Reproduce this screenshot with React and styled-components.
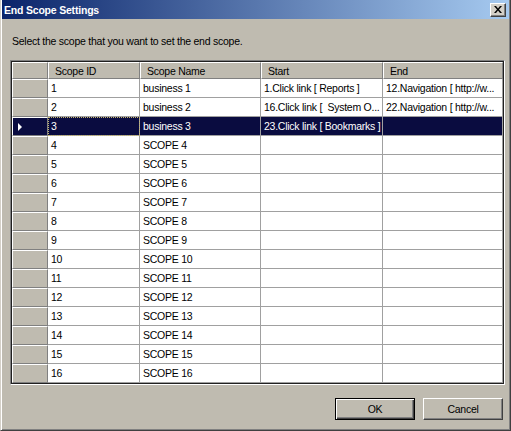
import React from 'react';
import styled, { createGlobalStyle } from 'styled-components';

const Global = createGlobalStyle`
    html, body {
        margin: 0;
        padding: 0;
        background: #bfbbb0;
    }
    * {
        box-sizing: border-box;
    }
`;

const Window = styled.div`
    width: 511px;
    height: 431px;
    display: flex;
    flex-direction: column;
    background: #bfbbb0;
    border-left: 1px solid #d4d0c8;
    border-right: 1px solid #404040;
    border-bottom: 1px solid #404040;
    box-shadow: inset 1px 0 #ffffff, inset -1px -1px #808080;
    font-family: 'Liberation Sans', Arial, sans-serif;
    font-size: 10.5px;
    letter-spacing: -0.25px;
    color: #000;
    padding: 0 1px 1px 1px;
`;

const TitleBar = styled.div`
    height: 19px;
    display: flex;
    align-items: center;
    justify-content: space-between;
    padding: 0 3px 0 2px;
    background: linear-gradient(to right, #0a246a, #a6caf0);
`;

const Title = styled.div`
    color: #fff;
    font-weight: bold;
    font-size: 10.5px;
    letter-spacing: -0.2px;
`;

const CloseButton = styled.div`
    width: 16px;
    height: 14px;
    background: #d4d0c8;
    display: flex;
    align-items: center;
    justify-content: center;
    border-top: 1px solid #fff;
    border-left: 1px solid #fff;
    border-right: 1px solid #404040;
    border-bottom: 1px solid #404040;
    box-shadow: inset -1px -1px #808080;
`;

const Body = styled.div`
    flex: 1;
    display: flex;
    flex-direction: column;
    padding: 16px 6px 0 8px;
`;

const Label = styled.div`
    line-height: 13px;
    padding-left: 2px;
`;

const Grid = styled.div`
    margin-top: 12px;
    width: 495px;
    border-top: 1px solid #808080;
    border-left: 1px solid #808080;
    border-right: 1px solid #ffffff;
    border-bottom: 1px solid #ffffff;
    box-shadow: inset 1px 1px #202020, inset -1px -1px #202020;
    padding: 1px;
    display: flex;
    flex-direction: column;
    background: #fff;
`;

const Row = styled.div`
    display: grid;
    grid-template-columns: 36px 92px 121px 122px 120px;
    height: ${(p) => (p.header ? '17px' : '19px')};
`;

const HeaderCell = styled.div`
    background: #bfbbb0;
    border-top: 1px solid #fff;
    border-left: 1px solid #fff;
    border-right: 1px solid #808080;
    border-bottom: 1px solid #808080;
    padding-left: 6px;
    display: flex;
    align-items: center;
    white-space: nowrap;
    overflow: hidden;
`;

const RowHead = styled.div`
    background: ${(p) => (p.selected ? '#0a0c40' : '#bfbbb0')};
    border-top: 1px solid #fff;
    border-left: 1px solid #fff;
    border-right: 1px solid #808080;
    border-bottom: 1px solid #808080;
    display: flex;
    align-items: center;
    padding-left: 5px;
`;

const Arrow = styled.div`
    width: 0;
    height: 0;
    border-top: 4px solid transparent;
    border-bottom: 4px solid transparent;
    border-left: 4px solid #fff;
`;

const Cell = styled.div`
    background: ${(p) => (p.selected ? '#0a0c40' : '#fff')};
    color: ${(p) => (p.selected ? '#fff' : '#000')};
    border-right: 1px solid #a0a0a0;
    border-bottom: 1px solid #a0a0a0;
    padding-left: 3px;
    line-height: 18px;
    white-space: pre;
    overflow: hidden;
    text-overflow: ellipsis;
    outline: ${(p) => (p.focus ? '1px dotted #c8b870' : 'none')};
    outline-offset: -1px;
`;

const Buttons = styled.div`
    margin-top: 13px;
    display: flex;
    justify-content: flex-end;
    gap: 8px;
`;

const Button = styled.div`
    width: 80px;
    height: 22px;
    display: flex;
    align-items: center;
    justify-content: center;
    background: #bfbbb0;
    border-top: 1px solid ${(p) => (p.default ? '#000' : '#fff')};
    border-left: 1px solid ${(p) => (p.default ? '#000' : '#fff')};
    border-right: 1px solid ${(p) => (p.default ? '#000' : '#404040')};
    border-bottom: 1px solid ${(p) => (p.default ? '#000' : '#404040')};
    box-shadow: ${(p) =>
        p.default
            ? 'inset 1px 1px #fff, inset -1px -1px #404040, inset -2px -2px #808080'
            : 'inset -1px -1px #808080'};
`;

const rows = [
    ['1', 'business 1', '1.Click link [ Reports ]', '12.Navigation [ http://w...'],
    ['2', 'business 2', '16.Click link [  System O...', '22.Navigation [ http://w...'],
    ['3', 'business 3', '23.Click link [ Bookmarks ]', ''],
];
for (let i = 4; i <= 16; i++) rows.push([String(i), `SCOPE ${i}`, '', '']);

export default function App() {
    return (
        <Window>
            <Global />
            <TitleBar>
                <Title>End Scope Settings</Title>
                <CloseButton>
                    <svg width="8" height="7" viewBox="0 0 8 7">
                        <path d="M0 0h2l2 2.5L6 0h2L5 3.5 8 7H6L4 4.5 2 7H0l3-3.5z" fill="#000" />
                    </svg>
                </CloseButton>
            </TitleBar>
            <Body>
                <Label>Select the scope that you want to set the end scope.</Label>
                <Grid>
                    <Row header>
                        <HeaderCell />
                        <HeaderCell>Scope ID</HeaderCell>
                        <HeaderCell>Scope Name</HeaderCell>
                        <HeaderCell>Start</HeaderCell>
                        <HeaderCell>End</HeaderCell>
                    </Row>
                    {rows.map((r) => {
                        const sel = r[0] === '3';
                        return (
                            <Row key={r[0]}>
                                <RowHead selected={sel}>{sel && <Arrow />}</RowHead>
                                <Cell selected={sel} focus={sel}>{r[0]}</Cell>
                                <Cell selected={sel}>{r[1]}</Cell>
                                <Cell selected={sel}>{r[2]}</Cell>
                                <Cell selected={sel}>{r[3]}</Cell>
                            </Row>
                        );
                    })}
                </Grid>
                <Buttons>
                    <Button default>OK</Button>
                    <Button>Cancel</Button>
                </Buttons>
            </Body>
        </Window>
    );
}
